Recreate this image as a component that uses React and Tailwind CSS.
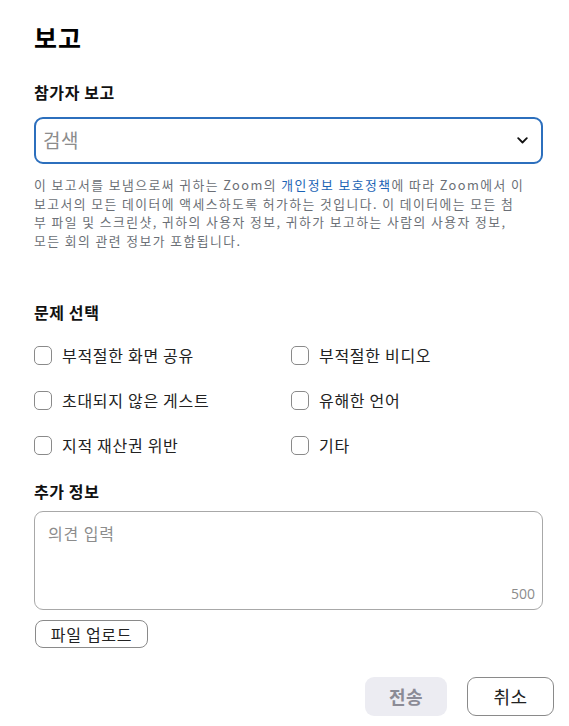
import React from "react";

const font = { fontFamily: '"Noto Sans CJK KR", "Noto Sans", sans-serif' };

function Check({ label }) {
  return (
    <label className="flex items-center gap-[10px] h-[22px]">
      <span className="w-[18px] h-[19px] rounded-[5px] border border-[#8a8a8a] bg-white shrink-0" />
      <span className="text-[16px] tracking-[0.7px] text-[#222] leading-none">{label}</span>
    </label>
  );
}

export default function App() {
  return (
    <div className="w-[569px] h-[726px] bg-white pl-[34px] pr-[26px] pt-[20px] relative" style={font}>
      <h1 className="text-[25px] tracking-[0.9px] font-bold text-black leading-[34px]">보고</h1>
      <h2 className="mt-[27px] text-[16px] tracking-[0.6px] font-bold text-[#111] leading-[22px]">참가자 보고</h2>
      <div className="mt-[14px] h-[47px] w-[509px] rounded-[9px] border-2 border-[#2c6fbd] flex items-center pl-[7px] pr-[13px] justify-between">
        <span className="text-[19px] tracking-[0.6px] text-[#8c8c8c]">검색</span>
        <svg width="11" height="7" viewBox="0 0 11 7" fill="none">
          <path d="M1.2 1.2 L5.5 5.5 L9.8 1.2" stroke="#111" strokeWidth="1.8" strokeLinecap="round" strokeLinejoin="round" />
        </svg>
      </div>
      <div className="mt-[12px] w-[520px] text-[12.8px] text-[#6b6f76] tracking-[1.45px] whitespace-nowrap flex flex-col">
        <span className="h-[18.5px] leading-[18.5px]">
          이 보고서를 보냄으로써 귀하는 Zoom의 <span className="text-[#1b63b5]">개인정보 보호정책</span>에 따라 Zoom에서 이
        </span>
        <span className="h-[18.5px] leading-[18.5px]">보고서의 모든 데이터에 액세스하도록 허가하는 것입니다. 이 데이터에는 모든 첨</span>
        <span className="h-[18.5px] leading-[18.5px]">부 파일 및 스크린샷, 귀하의 사용자 정보, 귀하가 보고하는 사람의 사용자 정보,</span>
        <span className="h-[18.5px] leading-[18.5px]">모든 회의 관련 정보가 포함됩니다.</span>
      </div>
      <h2 className="mt-[51px] text-[16px] tracking-[0.6px] font-bold text-[#111] leading-[22px]">문제 선택</h2>
      <div className="mt-[21px] grid grid-cols-[257px_1fr] gap-y-[23px]">
        <Check label="부적절한 화면 공유" />
        <Check label="부적절한 비디오" />
        <Check label="초대되지 않은 게스트" />
        <Check label="유해한 언어" />
        <Check label="지적 재산권 위반" />
        <Check label="기타" />
      </div>
      <h2 className="mt-[24px] text-[16px] tracking-[0.6px] font-bold text-[#111] leading-[22px]">추가 정보</h2>
      <div className="mt-[9px] h-[99px] w-[509px] rounded-[9px] border border-[#a8a8a8] relative">
        <span className="absolute left-[13px] top-[9px] text-[16px] tracking-[0.9px] text-[#8c8c8c]">의견 입력</span>
        <span className="absolute right-[7px] bottom-[8px] text-[14px] text-[#8c8c8c] leading-none" style={{ fontFamily: '"Open Sans", sans-serif' }}>500</span>
      </div>
      <button className="mt-[10px] ml-[1px] h-[28px] w-[113px] rounded-[8px] border border-[#8a8a8a] bg-white text-[16px] tracking-[0.7px] text-[#222] flex items-center justify-center leading-none">
        파일 업로드
      </button>
      <div className="absolute right-[15px] bottom-[10px] flex gap-[20px]">
        <button className="h-[39px] w-[82px] rounded-[9px] bg-[#ececf2] text-[18px] tracking-[0.5px] font-bold text-[#8b8b96] flex items-center justify-center">전송</button>
        <button className="h-[39px] w-[87px] rounded-[9px] border border-[#8a8a8a] bg-white text-[18px] tracking-[0.5px] text-[#222] flex items-center justify-center">취소</button>
      </div>
    </div>
  );
}
